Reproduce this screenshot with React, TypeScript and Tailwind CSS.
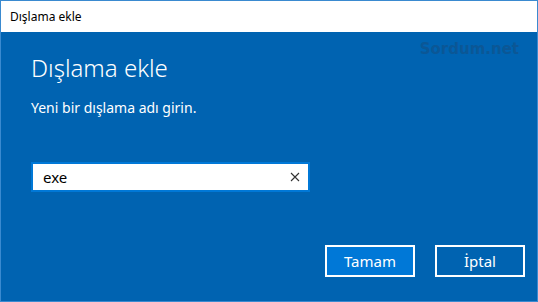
import React from "react";

const font = { fontFamily: '"Noto Sans", "Open Sans", sans-serif' };

export default function App() {
  return (
    <div
      className="flex h-[302px] w-[538px] flex-col border border-[#3a8ad0] bg-[#0063b1]"
      style={font}
    >
      {/* Title bar */}
      <div className="flex h-[31px] shrink-0 items-center bg-white pl-[9px] text-[12px] text-black">
        Dışlama ekle
      </div>

      {/* Body */}
      <div className="relative flex flex-1 flex-col pl-[30px] pr-[12px]">
        <div className="absolute right-[18px] top-[6px] font-['DejaVu_Sans',sans-serif] text-[15px] font-bold text-[#0b5796]">
          Sordum.net
        </div>

        <h1 className="mt-[20px] text-[24px] font-light leading-[32px] text-white">
          Dışlama ekle
        </h1>
        <p className="mt-[14px] text-[14px] leading-[20px] text-white">
          Yeni bir dışlama adı girin.
        </p>

        <div className="mt-[44px] flex h-[30px] w-[279px] items-center border-2 border-[#0078d7] bg-white pl-[10px] pr-[8px]">
          <span className="flex-1 text-[15px] text-black">exe</span>
          <svg width="10" height="10" viewBox="0 0 10 10" fill="none">
            <path d="M1 1L9 9M9 1L1 9" stroke="#333" strokeWidth="1.1" />
          </svg>
        </div>

        <div className="mt-auto mb-[24px] flex justify-end gap-[20px]">
          <button className="h-[32px] w-[90px] border-2 border-white bg-[#0078d7] text-[15px] text-white">
            Tamam
          </button>
          <button className="h-[32px] w-[90px] border-2 border-white bg-transparent text-[15px] text-white">
            İptal
          </button>
        </div>
      </div>
    </div>
  );
}
